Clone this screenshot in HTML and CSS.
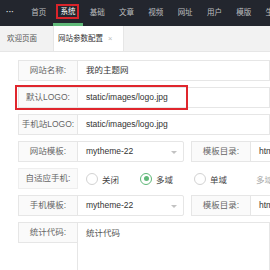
FILE: index.html
```html
<!DOCTYPE html>
<html lang="zh-CN">
  <head>
    <meta charset="utf-8">
    <link rel="stylesheet" href="styles.css">
    <title>网站参数配置</title>
  </head>
  <body>
    <div class="header">
      <span class="more">···</span>
      <a class="nav-item" href="#">首页</a>
      <a class="nav-item active" href="#"><span class="mark">系统</span></a>
      <a class="nav-item" href="#">基础</a>
      <a class="nav-item" href="#">文章</a>
      <a class="nav-item" href="#">视频</a>
      <a class="nav-item" href="#">网址</a>
      <a class="nav-item" href="#">用户</a>
      <a class="nav-item" href="#">模版</a>
      <a class="nav-item" href="#">生成</a>
    </div>
    <div class="tabs">
      <span class="tab">欢迎页面</span>
      <span class="tab current">网站参数配置<i class="close">×</i></span>
    </div>
    <div class="content">
      <div class="row">
        <label class="label">网站名称:</label>
        <div class="input">我的主题网</div>
      </div>
      <div class="row marked">
        <label class="label">默认LOGO:</label>
        <div class="input">static/images/logo.jpg</div>
        <div class="mark-box"></div>
      </div>
      <div class="row">
        <label class="label">手机站LOGO:</label>
        <div class="input">static/images/logo.jpg</div>
      </div>
      <div class="row">
        <label class="label">网站模板:</label>
        <div class="input select">mytheme-22<i class="arrow"></i></div>
        <label class="label second">模板目录:</label>
        <div class="input">html/mytheme-22</div>
      </div>
      <div class="row">
        <label class="label plain">自适应手机:</label>
        <div class="radios">
          <span class="radio"><i class="circle"></i>关闭</span>
          <span class="radio"><i class="circle on"></i>多域</span>
          <span class="radio"><i class="circle"></i>单域</span>
          <span class="aux">多域名模式</span>
        </div>
      </div>
      <div class="row">
        <label class="label">手机模板:</label>
        <div class="input select">mytheme-22<i class="arrow"></i></div>
        <label class="label second">模板目录:</label>
        <div class="input">html/mytheme-22</div>
      </div>
      <div class="row tall">
        <label class="label">统计代码:</label>
        <div class="input area">统计代码</div>
      </div>
    </div>
  </body>
</html>
```

FILE: styles.css
```css
html, body {
  margin: 0;
  overflow: hidden;
}
body {
  font-family: "Liberation Sans", "Noto Sans CJK SC", sans-serif;
  font-size: 8.5px;
  color: #333;
  background: #fff;
}
.header {
  display: flex;
  height: 26px;
  background: #23262e;
  white-space: nowrap;
}
.more {
  flex: none;
  width: 24px;
  padding-left: 6px;
  box-sizing: border-box;
  color: #ddd;
  font-size: 8px;
  line-height: 24px;
  font-weight: bold;
}
.nav-item {
  flex: none;
  width: 29.3px;
  box-sizing: border-box;
  text-align: center;
  line-height: 25px;
  font-size: 7.5px;
  color: rgba(255, 255, 255, .7);
  text-decoration: none;
}
.nav-item.active {
  border-bottom: 3px solid #5fb878;
  line-height: 24px;
  color: #fff;
}
.mark {
  display: inline-block;
  border: 2px solid #d9242b;
  padding: 1px 2px;
  line-height: 9px;
}
.tabs {
  display: flex;
  height: 25px;
  background: #f2f2f2;
  border-bottom: 1px solid #e6e6e6;
  font-size: 7.5px;
  color: #555;
}
.tab {
  line-height: 25px;
  padding: 0 8px 0 7px;
}
.tab.current {
  margin-left: 8px;
  padding: 0 11px 0 4px;
  background: #fff;
  border-left: 1px solid #e6e6e6;
  border-right: 1px solid #e6e6e6;
  color: #333;
}
.close {
  font-style: normal;
  color: #bbb;
  margin-left: 5px;
}
.content {
  padding: 8px 0 0 18px;
}
.row {
  position: relative;
  display: flex;
  height: 21px;
  margin-bottom: 6px;
  white-space: nowrap;
}
.label {
  flex: none;
  width: 60px;
  box-sizing: border-box;
  border: 1px solid #e6e6e6;
  background: #fafafa;
  color: #666;
  text-align: center;
  line-height: 19px;
}
.label.plain {
  border-color: #eee;
}
.label.second {
  margin-left: 7px;
}
.input {
  flex: 1 0 auto;
  position: relative;
  box-sizing: border-box;
  border: 1px solid #e6e6e6;
  border-left: none;
  padding-left: 8px;
  line-height: 19px;
  color: #333;
}
.input.select {
  flex: none;
  width: 107px;
  border-left: 1px solid #e6e6e6;
  margin-left: -1px;
  border-radius: 0 2px 2px 0;
}
.arrow {
  position: absolute;
  right: 6px;
  top: 9px;
  border: 3px solid transparent;
  border-top: 3px solid #c2c2c2;
}
.mark-box {
  position: absolute;
  left: -3px;
  top: -2px;
  width: 173px;
  height: 25px;
  box-sizing: border-box;
  border: 2px solid #e0262d;
}
.radios {
  display: flex;
  align-items: center;
  padding-left: 8px;
  color: #444;
}
.radio {
  display: flex;
  align-items: center;
  margin-right: 21px;
}
.circle {
  width: 12px;
  height: 12px;
  box-sizing: border-box;
  border: 1px solid #d2d2d2;
  border-radius: 50%;
  margin-right: 4px;
  position: relative;
}
.circle.on {
  border-color: #5fb878;
}
.circle.on::after {
  content: "";
  position: absolute;
  left: 2.5px;
  top: 2.5px;
  width: 5px;
  height: 5px;
  border-radius: 50%;
  background: #5fb878;
}
.aux {
  margin-left: 8px;
  color: #aaa;
}
.row.tall {
  height: 60px;
}
.row.tall .label {
  height: 21px;
}
.input.area {
  border-left: 1px solid #e6e6e6;
  margin-left: -1px;
  line-height: 20px;
  color: #555;
}
```
